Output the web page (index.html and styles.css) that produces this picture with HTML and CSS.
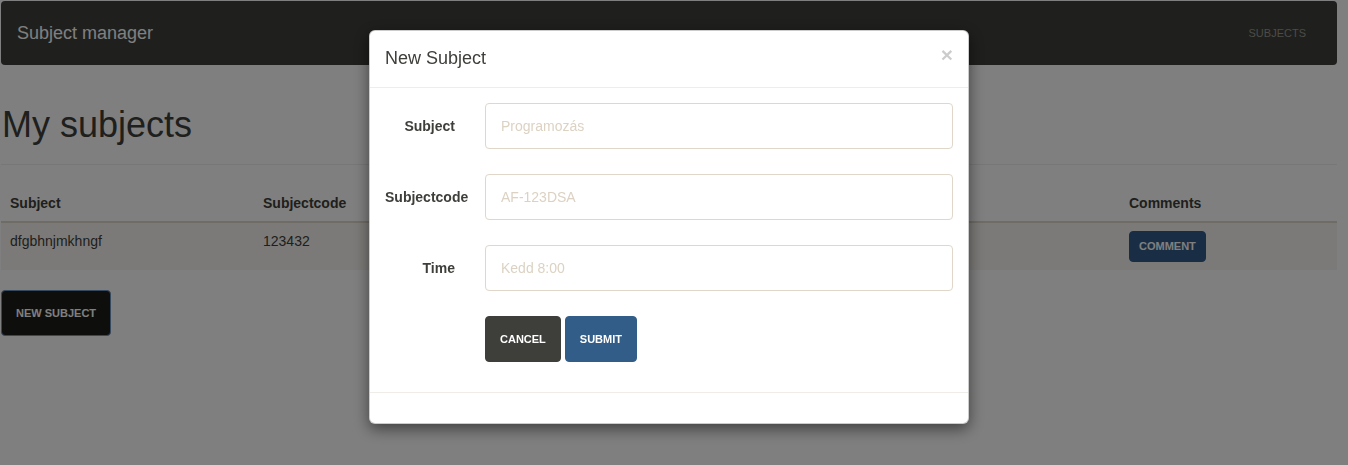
FILE: index.html
```html
<!DOCTYPE html>
<html lang="hu">
<head>
<meta charset="utf-8">
<title>Subject manager</title>
<link rel="stylesheet" href="styles.css">
</head>
<body>
<div class="page">
  <nav class="navbar">
    <span class="brand">Subject manager</span>
    <a class="nav-link" href="#">Subjects</a>
  </nav>

  <div class="page-header">
    <h1>My subjects</h1>
  </div>

  <table class="table">
    <thead>
      <tr>
        <th class="col-subject">Subject</th>
        <th class="col-code">Subjectcode</th>
        <th class="col-comments">Comments</th>
      </tr>
    </thead>
    <tbody>
      <tr>
        <td>dfgbhnjmkhngf</td>
        <td>123432</td>
        <td><button class="btn btn-primary btn-sm">Comment</button></td>
      </tr>
    </tbody>
  </table>

  <button class="btn btn-dark">New subject</button>
</div>

<div class="backdrop"></div>

<div class="modal">
  <div class="modal-dialog">
    <div class="modal-header">
      <h4 class="modal-title">New Subject</h4>
      <button class="close" type="button">&times;</button>
    </div>
    <div class="modal-body">
      <form class="form">
        <div class="form-group">
          <label class="control-label">Subject</label>
          <div class="field"><input class="form-control" type="text" placeholder="Programozás"></div>
        </div>
        <div class="form-group">
          <label class="control-label">Subjectcode</label>
          <div class="field"><input class="form-control" type="text" placeholder="AF-123DSA"></div>
        </div>
        <div class="form-group">
          <label class="control-label">Time</label>
          <div class="field"><input class="form-control" type="text" placeholder="Kedd 8:00"></div>
        </div>
        <div class="form-group last">
          <span class="control-label"></span>
          <div class="field actions">
            <button class="btn btn-default" type="button">Cancel</button>
            <button class="btn btn-primary" type="button">Submit</button>
          </div>
        </div>
      </form>
    </div>
    <div class="modal-footer"></div>
  </div>
</div>
</body>
</html>
```

FILE: styles.css
```css
* { box-sizing: border-box; }

html, body {
  margin: 0;
  padding: 0;
  background: #ffffff;
  font-family: "Liberation Sans", Arial, sans-serif;
  font-size: 14px;
  line-height: 20px;
  color: #3e3f3a;
}

.page {
  padding: 1px 11px 0 1px;
}

.navbar {
  display: flex;
  align-items: center;
  justify-content: space-between;
  height: 64px;
  background: #3e3f3a;
  border-radius: 4px;
  margin-bottom: 20px;
}

.brand {
  padding-left: 16px;
  font-size: 18px;
  color: #ffffff;
}

.nav-link {
  padding-right: 31px;
  font-size: 11px;
  text-transform: uppercase;
  color: #98978b;
  text-decoration: none;
}

.page-header {
  margin: 40px 0 20px;
  padding-bottom: 9px;
  border-bottom: 1px solid #eeeeee;
}

.page-header h1 {
  margin: 20px 0 10px 1px;
  font-size: 36px;
  line-height: 1.1;
  font-weight: 400;
  color: #3e3f3a;
}

.table {
  width: 100%;
  border-collapse: collapse;
  margin-bottom: 20px;
}

.table th,
.table td {
  padding: 8px 8px 8px 9px;
  text-align: left;
  vertical-align: top;
  line-height: 20px;
}

.table th {
  font-weight: bold;
  border-bottom: 2px solid #dfd7ca;
}

.table tbody tr {
  background: #f8f5f0;
}

.col-subject { width: 253px; }
.col-comments { width: 217px; }

.btn {
  display: inline-block;
  border: 1px solid transparent;
  border-radius: 4px;
  padding: 12px 14px;
  font-family: "Liberation Sans", Arial, sans-serif;
  font-size: 11px;
  font-weight: bold;
  line-height: 20px;
  text-transform: uppercase;
  color: #ffffff;
  cursor: pointer;
}

.btn-sm {
  padding: 5px 9px;
  line-height: 19px;
}

.btn-primary {
  background: #325d88;
  border-color: #325d88;
}

.btn-default {
  background: #3e3f3a;
  border-color: #3e3f3a;
}

.btn-dark {
  background: #1d1d1b;
  border-color: #6f92bd;
}

.backdrop {
  position: fixed;
  inset: 0;
  background: rgba(0, 0, 0, 0.5);
}

.modal {
  position: fixed;
  inset: 0;
  padding-right: 10px;
}

.modal-dialog {
  width: 600px;
  margin: 30px auto 0;
  background: #ffffff;
  border: 1px solid rgba(0, 0, 0, 0.2);
  border-radius: 6px;
  box-shadow: 0 5px 15px rgba(0, 0, 0, 0.5);
}

.modal-header {
  display: flex;
  align-items: flex-start;
  justify-content: space-between;
  padding: 15px;
  border-bottom: 1px solid #f0ede8;
}

.modal-title {
  margin: 0;
  font-size: 18px;
  font-weight: 400;
  line-height: 25.7px;
  color: #3e3f3a;
}

.close {
  margin-top: -2px;
  padding: 0;
  border: 0;
  background: transparent;
  font-family: "Liberation Sans", Arial, sans-serif;
  font-size: 21px;
  font-weight: bold;
  line-height: 1;
  color: #000000;
  opacity: 0.2;
}

.modal-body {
  padding: 15px;
}

.form-group {
  display: flex;
  align-items: center;
  margin: 0 -15px 25px;
}

.form-group.last {
  margin-bottom: 15px;
}

.control-label {
  width: 100px;
  flex: none;
  padding: 0 15px;
  text-align: right;
  font-weight: bold;
  white-space: nowrap;
}

.control-label:empty { height: 1px; }

.field {
  flex: 1;
  padding: 0 15px;
}

.form-control {
  display: block;
  width: 100%;
  height: 46px;
  padding: 12px 15px;
  border: 1px solid #dfd7ca;
  border-radius: 4px;
  font-family: "Liberation Sans", Arial, sans-serif;
  font-size: 14px;
  color: #3e3f3a;
  background: #ffffff;
}

.form-control::placeholder {
  color: #dcd2c3;
  opacity: 1;
}

.actions {
  display: flex;
  gap: 4px;
}

.modal-footer {
  height: 31px;
  border-top: 1px solid #f0ede8;
}
```
